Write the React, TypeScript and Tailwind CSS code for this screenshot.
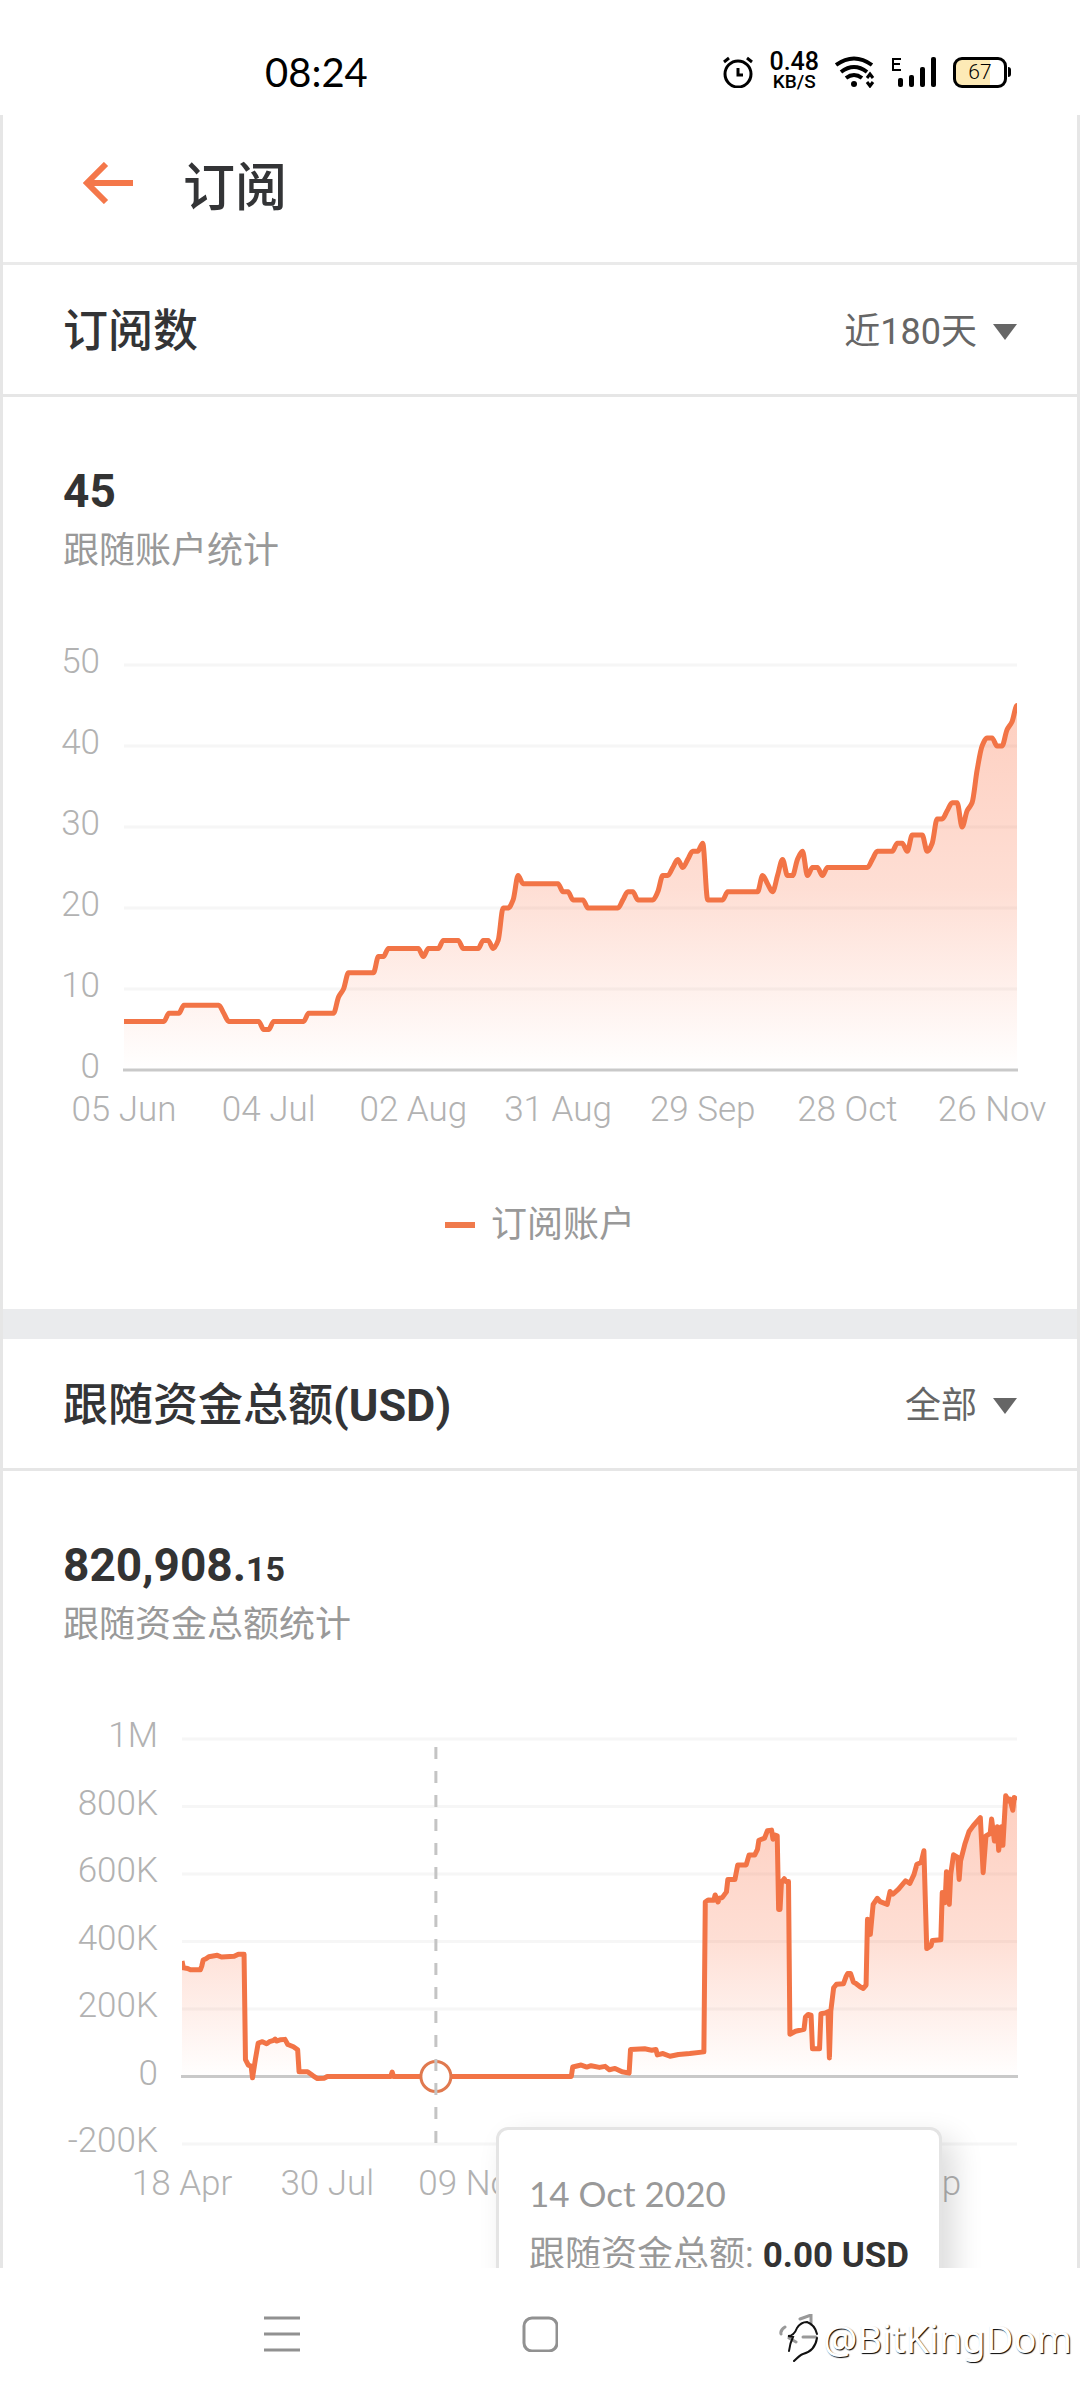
import { useState } from "react";
import type { ReactNode } from "react";

type Point = [number, number];

type XLabel = {
  at: number;
  text: string;
};

type ChartProps = {
  id: string;
  left: number;
  min: number;
  max: number;
  ticks: { value: number; text: string }[];
  xLabels: XLabel[];
  points: Point[];
  smooth?: boolean;
  marker?: number;
};

const PLOT_RIGHT = 1014;
const PLOT_TOP = 35;
const PLOT_HEIGHT = 405;

// [accounts, days in a row]
const SUBSCRIBERS: [number, number][] = [
  [6, 9], [7, 3], [8, 8], [7, 1], [6, 7], [5, 2], [6, 7], [7, 6], [9, 1], [10, 1],
  [12, 6], [14, 2], [15, 7], [14, 1], [15, 3], [16, 4], [15, 4], [16, 2], [15, 1], [16, 1],
  [20, 2], [21, 1], [24, 1], [23, 8], [22, 2], [21, 3], [20, 7], [21, 1], [22, 2], [21, 4],
  [22, 1], [24, 2], [25, 1], [26, 1], [25, 1], [26, 1], [27, 2], [28, 1], [21, 4], [22, 7],
  [24, 1], [23, 1], [22, 1], [24, 1], [26, 1], [24, 2], [26, 1], [27, 1], [24, 1], [25, 2],
  [24, 1], [25, 9], [26, 1], [27, 4], [28, 2], [27, 1], [29, 3], [27, 1], [28, 1], [31, 2],
  [32, 1], [33, 2], [30, 1], [32, 1], [33, 1], [37, 1], [40, 1], [41, 2], [40, 2], [42, 1],
  [43, 1], [45, 1],
];

const subscriberPoints: Point[] = SUBSCRIBERS.flatMap(([value, days]) =>
  Array.from({ length: days }, () => value)
).map((value, day) => [day, value]);

// [day, thousands of USD]
const FUNDS: Point[] = [
  [0, 342], [1, 322], [4, 320], [6, 316], [13, 316], [14, 327], [15, 345], [17, 349], [19, 355],
  [25, 359], [28, 354], [37, 356], [40, 362], [44, 362], [45, 50], [47, 34], [49, 31], [50, -4],
  [52, 50], [54, 99], [57, 103], [60, 97], [62, 103], [65, 107], [66, 111], [67, 105], [70, 109],
  [73, 110], [75, 95], [79, 88], [82, 79], [83, 14], [89, 14], [93, 2], [96, -6], [101, -5],
  [103, 0], [148, 0], [149, 13], [150, 0], [276, 0], [277, 28], [283, 34], [287, 28], [290, 32],
  [296, 27], [300, 30], [303, 20], [307, 24], [312, 14], [317, 10], [318, 80], [328, 82], [333, 78],
  [336, 80], [337, 64], [341, 68], [346, 60], [352, 65], [360, 68], [370, 73], [371, 517], [373, 523],
  [377, 522], [378, 538], [380, 517], [381, 528], [383, 530], [386, 547], [387, 584], [392, 584],
  [394, 627], [400, 627], [402, 656], [406, 656], [408, 673], [409, 700], [413, 706], [415, 728],
  [418, 730], [419, 703], [420, 716], [422, 713], [423, 495], [424, 495], [425, 575], [427, 586],
  [428, 578], [430, 578], [431, 125], [435, 134], [441, 140], [442, 176], [444, 184], [446, 182],
  [447, 82], [452, 82], [453, 186], [456, 188], [458, 192], [459, 55], [460, 194], [462, 263],
  [464, 273], [469, 275], [471, 298], [472, 305], [474, 305], [476, 280], [478, 275], [481, 265],
  [483, 261], [485, 271], [486, 466], [488, 421], [490, 510], [493, 528], [495, 518], [500, 510],
  [502, 548], [504, 540], [508, 555], [513, 580], [516, 572], [519, 599], [521, 629], [524, 634],
  [526, 669], [528, 379], [531, 387], [532, 403], [538, 405], [539, 545], [541, 515], [542, 607],
  [544, 510], [545, 599], [547, 657], [550, 649], [551, 584], [552, 639], [555, 688], [558, 726],
  [561, 743], [566, 767], [568, 604], [570, 713], [573, 720], [574, 763], [576, 698], [578, 740],
  [579, 670], [581, 740], [582, 685], [584, 832], [586, 817], [587, 822], [589, 789], [590, 827],
  [592, 820],
];

const linePath = (pts: Point[]) => "M" + pts.map((p) => p.join(" ")).join("L");

// monotone cubic, so flat runs stay flat
const smoothPath = (pts: Point[]) => {
  const slope = pts.map((p, i) => {
    if (i === 0 || i === pts.length - 1) return 0;
    const a = (p[1] - pts[i - 1][1]) / (p[0] - pts[i - 1][0]);
    const b = (pts[i + 1][1] - p[1]) / (pts[i + 1][0] - p[0]);
    return a * b <= 0 ? 0 : (2 * a * b) / (a + b);
  });
  let d = `M${pts[0][0]} ${pts[0][1]}`;
  for (let i = 1; i < pts.length; i++) {
    const [x0, y0] = pts[i - 1];
    const [x1, y1] = pts[i];
    const h = (x1 - x0) / 3;
    d += `C${x0 + h} ${y0 + slope[i - 1] * h} ${x1 - h} ${y1 - slope[i] * h} ${x1} ${y1}`;
  }
  return d;
};

function AreaChart({ id, left, min, max, ticks, xLabels, points, smooth, marker }: ChartProps) {
  const lastDay = points[points.length - 1][0];
  const x = (day: number) => left + (day / lastDay) * (PLOT_RIGHT - left);
  const y = (value: number) => PLOT_TOP + ((max - value) / (max - min)) * PLOT_HEIGHT;

  const scaled = points.map(([day, value]): Point => [x(day), y(value)]);
  const line = smooth ? smoothPath(scaled) : linePath(scaled);

  return (
    <svg viewBox="0 0 1074 520" className="block h-auto w-full">
      <defs>
        <linearGradient id={`${id}-fill`} x1="0" y1="0" x2="0" y2="1">
          <stop offset="0" stopColor="#fb6a3c" stopOpacity="0.32" />
          <stop offset="0.5" stopColor="#fb6a3c" stopOpacity="0.22" />
          <stop offset="1" stopColor="#fb6a3c" stopOpacity="0" />
        </linearGradient>
        <clipPath id={`${id}-clip`}>
          <rect x={left} y="0" width={PLOT_RIGHT - left} height="520" />
        </clipPath>
      </defs>

      {ticks.map((t) => (
        <g key={t.text}>
          {t.value !== 0 && (
            <line x1={left} x2={PLOT_RIGHT} y1={y(t.value)} y2={y(t.value)} stroke="#f6f6f6" strokeWidth="3" />
          )}
          <text x={left - 24} y={y(t.value) + 8} textAnchor="end" className="fill-[#b2b2b2] text-[35px] font-light">
            {t.text}
          </text>
        </g>
      ))}
      {xLabels.map((l) => (
        <text key={l.text} x={x(l.at)} y="491" textAnchor="middle" className="fill-[#b2b2b2] text-[35px] font-light">
          {l.text}
        </text>
      ))}

      <path
        d={`${line}L${PLOT_RIGHT} ${y(0)}L${left} ${y(0)}Z`}
        fill={`url(#${id}-fill)`}
      />
      <line x1={left - 1} x2={PLOT_RIGHT + 1} y1={y(0)} y2={y(0)} stroke="#c9c9c9" strokeWidth="3" />
      <path
        d={line}
        clipPath={`url(#${id}-clip)`}
        fill="none"
        stroke="#f27446"
        strokeWidth="5"
        strokeLinejoin="round"
      />

      {marker !== undefined && (
        <>
          <circle cx={x(marker)} cy={y(0)} r="15" fill="#fff" stroke="#e0794f" strokeWidth="3" />
          <line
            x1={x(marker)}
            x2={x(marker)}
            y1={PLOT_TOP + 8}
            y2={PLOT_TOP + PLOT_HEIGHT}
            stroke="#c4c4c4"
            strokeWidth="3"
            strokeDasharray="12 12"
          />
        </>
      )}
    </svg>
  );
}

function StatusBar() {
  return (
    <div className="flex h-[115px] shrink-0 items-start justify-between pt-[52px] pr-[69px] pl-[265px] text-black">
      <span className="font-[Lato,sans-serif] text-[40px] leading-[40px]">08:24</span>
      <div className="flex h-10 items-center">
        <svg width="30" height="32" viewBox="0 0 30 32" fill="none" stroke="#000">
          <circle cx="15" cy="18" r="13" strokeWidth="3" />
          <path d="M15 12v7h5" strokeWidth="3" />
          <path d="M1 6l5-4M29 6l-5-4" strokeWidth="3" />
        </svg>
        <div className="ml-4 flex flex-col items-center font-medium">
          <span className="text-[25px] leading-[20px]">0.48</span>
          <span className="text-[19px] leading-[20px]">KB/S</span>
        </div>
        <svg className="ml-4" width="40" height="32" viewBox="0 0 40 32" fill="none" stroke="#000">
          <path d="M1 9Q19-4 37 9" strokeWidth="4" />
          <path d="M6 16Q19 6 32 16" strokeWidth="4" />
          <path d="M11 22Q19 16 27 22" strokeWidth="4" />
          <circle cx="19" cy="28" r="3" fill="#000" stroke="none" />
          <path d="M32 22l3-4 3 4M32 26l3 4 3-4" strokeWidth="3" />
        </svg>
        <svg className="ml-4" width="46" height="32" viewBox="0 0 46 32">
          <path d="M10 3H2v11h8M2 8h7" fill="none" stroke="#000" strokeWidth="2" />
          <rect x="7" y="22" width="5" height="9" rx="2" />
          <rect x="18" y="19" width="5" height="12" rx="2" />
          <rect x="29" y="11" width="5" height="20" rx="2" />
          <rect x="40" y="1" width="5" height="30" rx="2" />
        </svg>
        <div className="ml-4 flex items-center">
          <div className="flex h-[31px] w-[54px] items-center justify-center rounded-[9px] border-3 border-black bg-linear-to-r from-[#fdeab6] from-70% to-white to-70% text-[21px] leading-none font-light">
            67
          </div>
          <span className="ml-px h-[10px] w-[3px] rounded-r-sm bg-black" />
        </div>
      </div>
    </div>
  );
}

function SectionHeader({ title, unit, range }: { title: string; unit?: string; range: string }) {
  const [value, setValue] = useState(range);

  return (
    <div className="flex h-[132px] items-center justify-between border-b-3 border-[#e6e6e6] pt-1 pr-[60px] pl-[60px]">
      <h2 className="text-[45px] leading-[60px] font-medium text-[#333436]">
        {title}
        {unit && <span className="font-bold">({unit})</span>}
      </h2>
      <label className="flex items-center gap-4 text-[#666]">
        <select
          aria-label={title}
          value={value}
          onChange={(e) => setValue(e.target.value)}
          className="field-sizing-content appearance-none bg-transparent text-[36px] leading-[54px] outline-none"
        >
          <option>近180天</option>
          <option>全部</option>
        </select>
        <svg width="24" height="16" viewBox="0 0 24 16" fill="#666">
          <path d="M0 0h24L12 16z" />
        </svg>
      </label>
    </div>
  );
}

function Summary({ value, label }: { value: ReactNode; label: string }) {
  return (
    <div className="flex h-[233px] flex-col pt-16 pl-[60px]">
      <p className="text-[46px] leading-[60px] font-bold text-[#333]">{value}</p>
      <p className="text-[36px] leading-[60px] text-[#999]">{label}</p>
    </div>
  );
}

export default function App() {
  return (
    <div className="flex h-screen flex-col overflow-hidden bg-white font-[Roboto,'Noto_Sans_CJK_SC',sans-serif]">
      <StatusBar />

      <main className="min-h-0 flex-1 overflow-hidden border-x-3 border-[#e6e6e6]">
        <header className="flex h-[150px] items-center gap-[50px] border-b-3 border-[#eaeaea] pl-[80px]">
          <button aria-label="返回" className="pb-3">
            <svg width="50" height="42" viewBox="0 0 50 42" fill="none" stroke="#f4774a" strokeWidth="6">
              <path d="M50 21H5M23 2L4 21l19 19" />
            </svg>
          </button>
          <h1 className="text-[52px] leading-[72px] font-medium text-[#333436]">订阅</h1>
        </header>

        <section>
          <SectionHeader title="订阅数" range="近180天" />
          <Summary value="45" label="跟随账户统计" />
          <AreaChart
            id="subscribers"
            left={121}
            min={0}
            max={50}
            smooth
            points={subscriberPoints}
            ticks={[50, 40, 30, 20, 10, 0].map((value) => ({ value, text: String(value) }))}
            xLabels={[
              { at: 0, text: "05 Jun" },
              { at: 29, text: "04 Jul" },
              { at: 58, text: "02 Aug" },
              { at: 87, text: "31 Aug" },
              { at: 116, text: "29 Sep" },
              { at: 145, text: "28 Oct" },
              { at: 174, text: "26 Nov" },
            ]}
          />
          <div className="flex items-center justify-center gap-4 pt-12 pb-[57px]">
            <span className="h-[6px] w-[30px] bg-[#f07a4c]" />
            <span className="text-[36px] leading-[54px] text-[#999]">订阅账户</span>
          </div>
        </section>

        <div className="h-[30px] bg-[#eaebed]" />

        <section>
          <SectionHeader title="跟随资金总额" unit="USD" range="全部" />
          <Summary
            value={
              <>
                820,908.<span className="text-[34px] leading-none">15</span>
              </>
            }
            label="跟随资金总额统计"
          />
          <div className="relative">
            <AreaChart
              id="funds"
              left={179}
              min={-200}
              max={1000}
              marker={180}
              points={FUNDS}
              ticks={[
                { value: 1000, text: "1M" },
                { value: 800, text: "800K" },
                { value: 600, text: "600K" },
                { value: 400, text: "400K" },
                { value: 200, text: "200K" },
                { value: 0, text: "0" },
                { value: -200, text: "-200K" },
              ]}
              xLabels={[
                { at: 0, text: "18 Apr" },
                { at: 103, text: "30 Jul" },
                { at: 206, text: "09 Nov" },
                { at: 515, text: "14 Sep" },
              ]}
            />
            <div className="absolute top-[423px] left-[493px] rounded-xl border-3 border-[#e4e4e4] bg-white px-[30px] py-8 text-[36px] leading-[62px] whitespace-nowrap text-[#999] shadow-[12px_12px_30px_rgba(0,0,0,0.14)]">
              <p className="font-[Lato,sans-serif] text-[35px]">14 Oct 2020</p>
              <p>
                跟随资金总额: <b className="text-[35px] text-[#333]">0.00 USD</b>
              </p>
            </div>
          </div>
        </section>
      </main>

      <nav className="relative flex h-[132px] shrink-0 items-center justify-center gap-[222px] pr-[258px] text-[#919191]">
        <button aria-label="菜单">
          <svg width="36" height="36" viewBox="0 0 36 36" stroke="currentColor" strokeWidth="3">
            <path d="M0 2h36M0 18h36M0 34h36" />
          </svg>
        </button>
        <button aria-label="主页">
          <svg width="36" height="36" viewBox="0 0 36 36" fill="none" stroke="currentColor" strokeWidth="3">
            <rect x="2" y="2" width="33" height="33" rx="8" />
          </svg>
        </button>
        <div className="absolute right-2 bottom-8 flex items-center gap-1">
          <svg width="40" height="48" viewBox="0 0 40 48" fill="none" strokeLinecap="round">
            <path d="M21 5l11-4v9M6 13q-5 3-4 7M10 24l7 4M24 23h13" stroke="#999" strokeWidth="3" />
            <path d="M10 37q1-8 4-14l-5-1q6 0 9-8 4-6 10-6 8 3 10 12M38 24q-2 13-14 16-3 1-9 7" stroke="#111" strokeWidth="2" />
          </svg>
          <span className="font-['Noto_Sans',sans-serif] text-[38px] leading-[60px] text-white [text-shadow:1px_1px_1px_#000]">
            @BitKingDom
          </span>
        </div>
      </nav>
    </div>
  );
}
